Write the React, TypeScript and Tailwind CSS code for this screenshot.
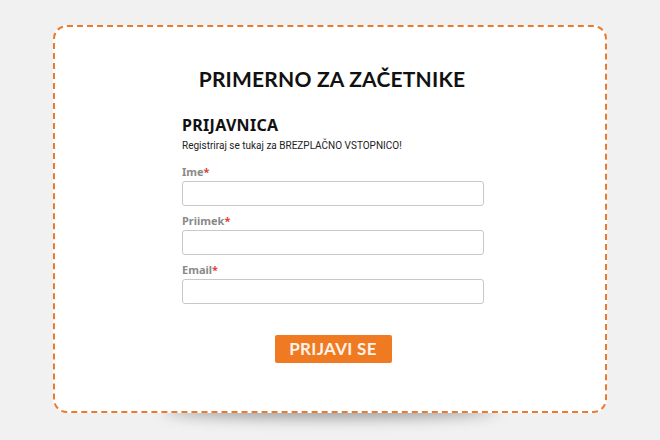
import React from 'react';

const fields = ['Ime', 'Priimek', 'Email'];

const App: React.FC = () => {
  return (
    <div className="w-[660px] h-[440px] bg-[#f1f1f1] pt-[25px] overflow-hidden">
      <div className="relative mx-auto w-[554px] h-[388px]">
        {/* curved shadow under the card */}
        <div className="absolute left-[110px] right-[110px] bottom-[-3px] h-[16px] rounded-[50%] bg-black/45 blur-[8px]" />
        <div className="relative h-full rounded-[14px] border-2 border-dashed border-[#ec7a2d] bg-white pt-[38px]">
          <h1 className="translate-x-[2px] text-center text-[21px] font-bold leading-[28px] text-[#111] tracking-[0.2px] font-['Lato',sans-serif]">
            PRIMERNO ZA ZAČETNIKE
          </h1>

          <form className="mx-auto mt-[21px] w-[302px] translate-x-[3px] font-['Noto_Sans',sans-serif]">
            <h2 className="text-[16px] font-bold leading-[22px] text-[#111] tracking-[0.3px]">PRIJAVNICA</h2>
            <p className="mt-[2px] text-[10px] leading-[16px] text-[#222] font-['Roboto',sans-serif]">
              Registriraj se tukaj za BREZPLAČNO VSTOPNICO!
            </p>

            <div className="mt-[11px] flex flex-col gap-[8px]">
              {fields.map((f) => (
                <div key={f} className="flex flex-col">
                  <label className="text-[11px] font-bold leading-[14px] text-[#8a8a8a]">
                    {f}
                    <span className="text-[#e0413a]">*</span>
                  </label>
                  <input
                    className="mt-[2px] h-[25px] w-full rounded-[3px] border border-[#c8c8c8] bg-white"
                    type="text"
                  />
                </div>
              ))}
            </div>

            <div className="mt-[31px] flex justify-center">
              <button
                type="button"
                className="h-[28px] w-[117px] rounded-[2px] bg-[#f07a22] text-[17px] font-bold leading-[28px] text-[#fdf3ea] font-['Lato',sans-serif] tracking-[0.3px]"
              >
                PRIJAVI SE
              </button>
            </div>
          </form>
        </div>
      </div>
    </div>
  );
};

export default App;
